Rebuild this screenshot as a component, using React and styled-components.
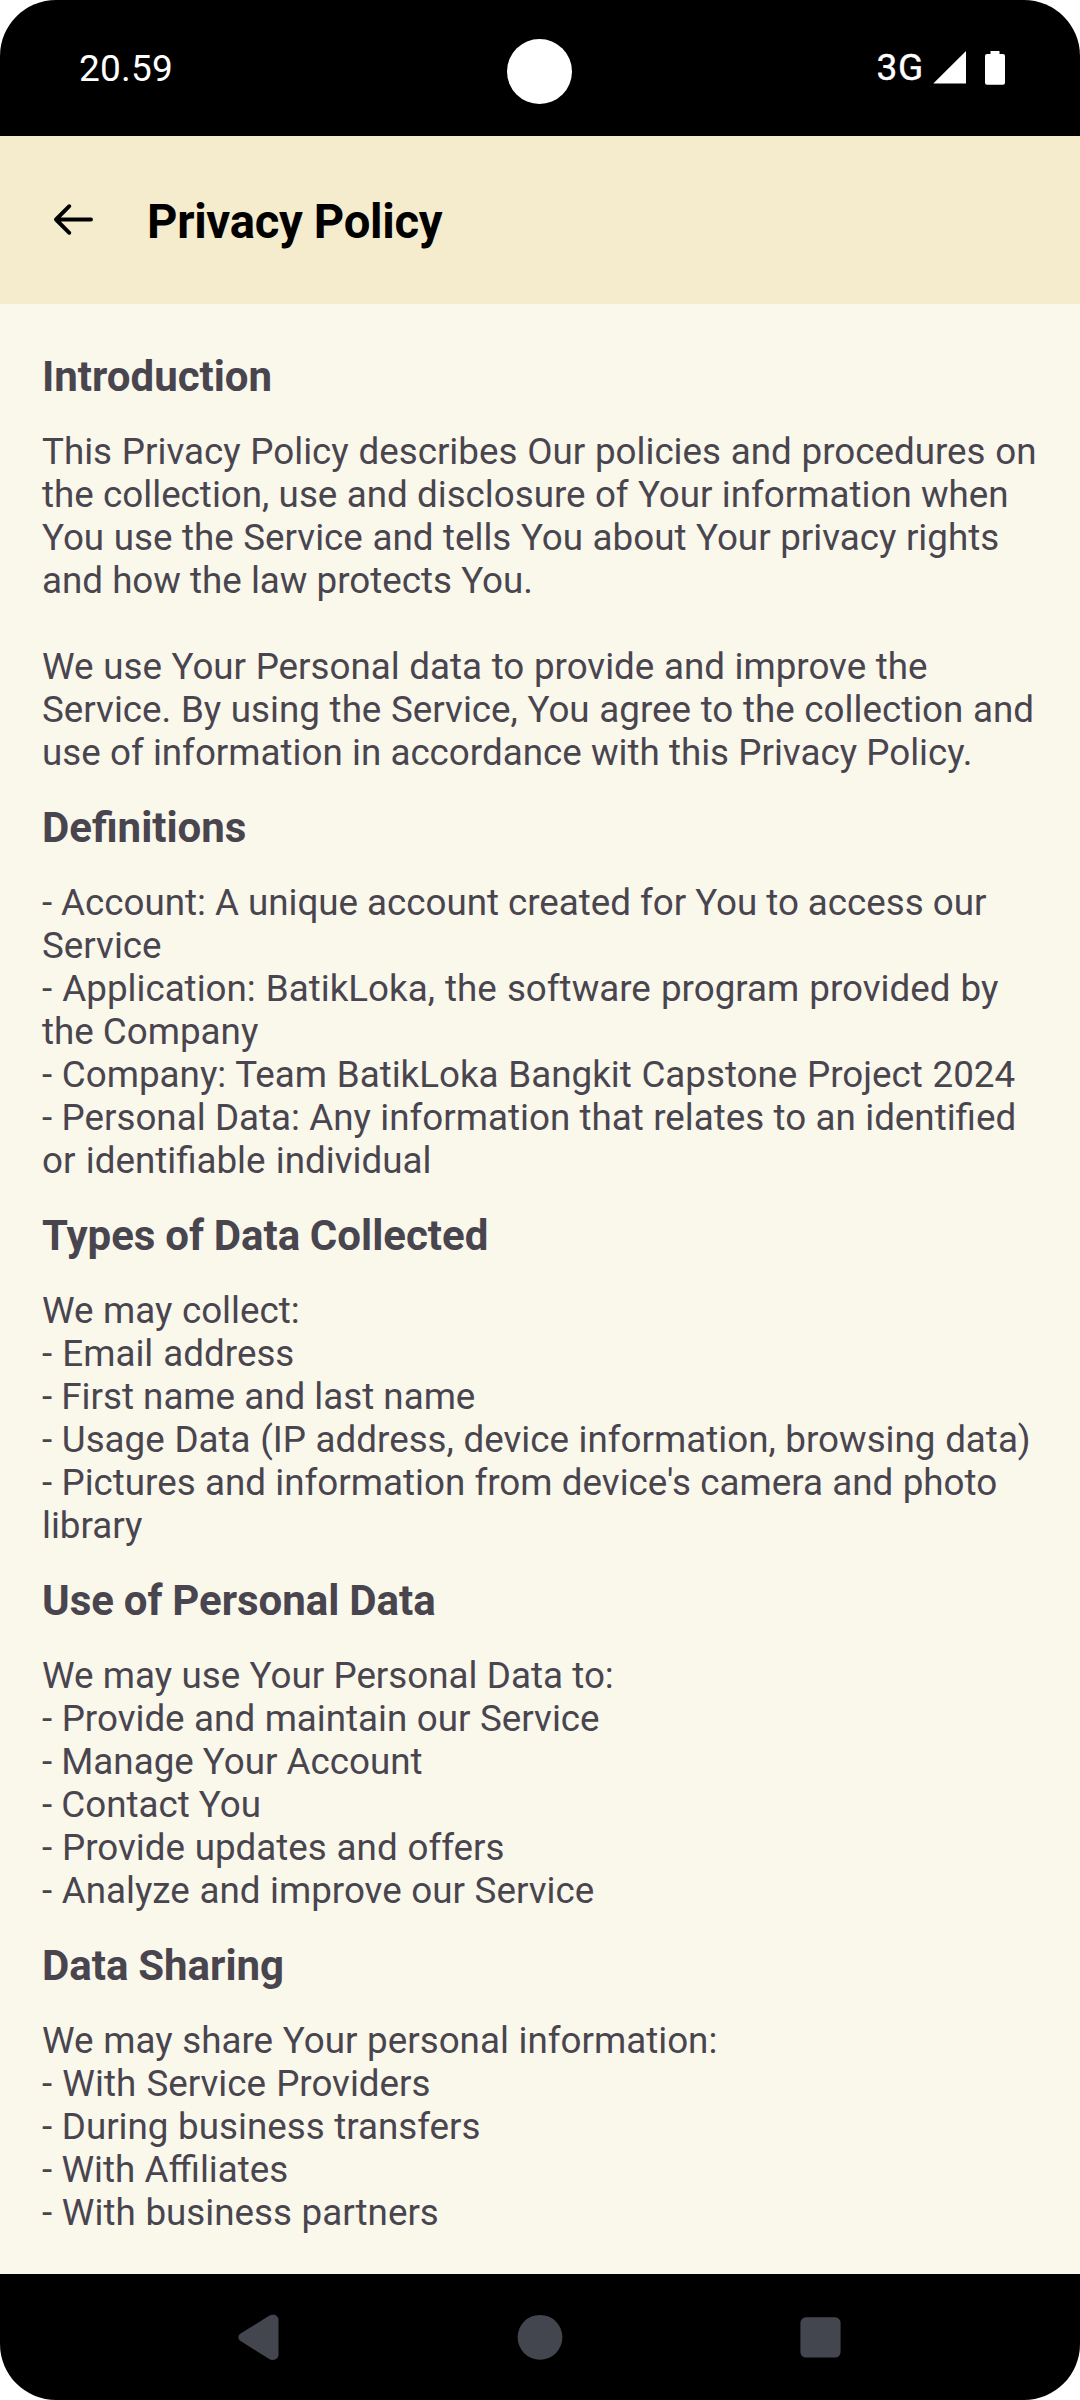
import React from "react";
import styled, { createGlobalStyle } from "styled-components";

const GlobalStyle = createGlobalStyle`
  body { margin: 0; background: #fff; }
  * { box-sizing: border-box; }
`;

const Screen = styled.div`
  width: 1080px;
  height: 2400px;
  display: flex;
  flex-direction: column;
  overflow: hidden;
  border-radius: 56px;
  background: #faf7eb;
  font-family: Roboto, "Liberation Sans", sans-serif;
`;

const StatusBar = styled.header`
  position: relative;
  height: 136px;
  flex: none;
  display: flex;
  justify-content: space-between;
  padding: 47px 75px 0 79px;
  background: #000;
  color: #fff;
  font-size: 37px;
  line-height: 44px;
`;

const Clock = styled.span`
  letter-spacing: 0.2px;
`;

const Camera = styled.div`
  position: absolute;
  left: 507px;
  top: 39px;
  width: 65px;
  height: 65px;
  border-radius: 50%;
  background: #fff;
`;

const StatusIcons = styled.div`
  display: flex;
  align-items: flex-start;
`;

const Network = styled.span`
  margin-top: -1px;
  margin-right: 9px;
  letter-spacing: 0.7px;
  -webkit-text-stroke: 0.4px #fff;
`;

const SignalIcon = styled.svg`
  width: 33px;
  height: 33px;
  margin: 4px 19px 0 0;
`;

const BatteryIcon = styled.svg`
  width: 20px;
  height: 34px;
  margin-top: 4px;
`;

const AppBar = styled.div`
  height: 168px;
  flex: none;
  display: flex;
  align-items: flex-start;
  padding: 57px 0 0 42px;
  background: #f5ebcd;
`;

const BackButton = styled.button`
  width: 63px;
  height: 52px;
  padding: 0;
  border: 0;
  background: none;
  margin-right: 42px;
`;

const Title = styled.h1`
  margin: 1px 0 0;
  color: #000;
  font-size: 47.25px;
  font-weight: 700;
  line-height: 56px;
  letter-spacing: -0.3px;
`;

const Policy = styled.main`
  flex: 1;
  display: flex;
  flex-direction: column;
  gap: 29px;
  padding: 48px 37px 0 42px;
  color: #49454f;
`;

const Section = styled.section`
  display: flex;
  flex-direction: column;
  gap: 29px;
`;

const Heading = styled.h2`
  margin: 0;
  font-size: 42px;
  font-weight: 700;
  line-height: 49px;
  word-spacing: -0.7px;
`;

const Body = styled.div`
  font-size: 36.75px;
  line-height: 43px;
`;

const Line = styled.p`
  margin: 0;
  min-height: 43px;
  white-space: nowrap;
  word-spacing: ${(p) => p.$spacing}px;
`;

const NavBar = styled.nav`
  height: 126px;
  flex: none;
  display: flex;
  align-items: center;
  justify-content: space-between;
  padding: 0 236px 0 235px;
  background: #000;
`;

const NavIcon = styled.svg`
  width: 48px;
  height: 48px;
  fill: #44464f;
`;

// Each line is [text, extra space between words in px].
const sections = [
  {
    title: "Introduction",
    lines: [
      ["This Privacy Policy describes Our policies and procedures on", 0.65],
      ["the collection, use and disclosure of Your information when", 0.2],
      ["You use the Service and tells You about Your privacy rights", 0.45],
      ["and how the law protects You.", 0],
      ["", 0],
      ["We use Your Personal data to provide and improve the", 0.5],
      ["Service. By using the Service, You agree to the collection and", 0.55],
      ["use of information in accordance with this Privacy Policy.", 0.1],
    ],
  },
  {
    title: "Definitions",
    lines: [
      ["- Account: A unique account created for You to access our", -0.15],
      ["Service", 0],
      ["- Application: BatikLoka, the software program provided by", 1],
      ["the Company", 0],
      ["- Company: Team BatikLoka Bangkit Capstone Project 2024", 0.6],
      ["- Personal Data: Any information that relates to an identified", 0.25],
      ["or identifiable individual", 1.2],
    ],
  },
  {
    title: "Types of Data Collected",
    lines: [
      ["We may collect:", 0.4],
      ["- Email address", 1],
      ["- First name and last name", 0],
      ["- Usage Data (IP address, device information, browsing data)", 0.55],
      ["- Pictures and information from device's camera and photo", 0.2],
      ["library", 0],
    ],
  },
  {
    title: "Use of Personal Data",
    lines: [
      ["We may use Your Personal Data to:", 0.2],
      ["- Provide and maintain our Service", 0.4],
      ["- Manage Your Account", 0],
      ["- Contact You", 0],
      ["- Provide updates and offers", 0.7],
      ["- Analyze and improve our Service", 0.5],
    ],
  },
  {
    title: "Data Sharing",
    lines: [
      ["We may share Your personal information:", 0.6],
      ["- With Service Providers", 1.1],
      ["- During business transfers", 0.5],
      ["- With Affiliates", 0.2],
      ["- With business partners", 0.6],
    ],
  },
];

export default function App() {
  return (
    <>
      <GlobalStyle />
      <Screen>
        <StatusBar>
          <Clock>20.59</Clock>
          <Camera />
          <StatusIcons>
            <Network>3G</Network>
            <SignalIcon viewBox="0 0 33 33">
              <path d="M33 0V32.6H0.3Z" fill="#fff" />
            </SignalIcon>
            <BatteryIcon viewBox="0 0 20 34">
              <path d="M5.5 0h9v3h3.5a2 2 0 0 1 2 2v26.7a2 2 0 0 1-2 2H2a2 2 0 0 1-2-2V5a2 2 0 0 1 2-2h3.5Z" fill="#fff" />
            </BatteryIcon>
          </StatusIcons>
        </StatusBar>
        <AppBar>
          <BackButton aria-label="Back">
            <svg width="63" height="52" viewBox="0 0 63 52" fill="none" stroke="#000" strokeWidth="3.9" strokeLinecap="round" strokeLinejoin="round">
              <path d="M49 26.5H14M27.3 13.2L14 26.5L27.3 39.8" />
            </svg>
          </BackButton>
          <Title>Privacy Policy</Title>
        </AppBar>
        <Policy>
          {sections.map((s) => (
            <Section key={s.title}>
              <Heading>{s.title}</Heading>
              <Body>
                {s.lines.map(([text, spacing], i) => (
                  <Line key={i} $spacing={spacing}>{text}</Line>
                ))}
              </Body>
            </Section>
          ))}
        </Policy>
        <NavBar>
          <NavIcon viewBox="0 0 48 48">
            <path d="M5.6 20.6L33.8 2.9C38.3 0.2 43.5 2 43.5 7V41.6C43.5 46.6 38.3 48.4 33.8 45.7L5.6 28C2.6 26.2 2.6 22.4 5.6 20.6Z" />
          </NavIcon>
          <NavIcon viewBox="0 0 48 48">
            <circle cx="24" cy="24.3" r="22.4" />
          </NavIcon>
          <NavIcon viewBox="0 0 48 48">
            <rect x="4.4" y="4.3" width="40.2" height="40.2" rx="5.5" />
          </NavIcon>
        </NavBar>
      </Screen>
    </>
  );
}
